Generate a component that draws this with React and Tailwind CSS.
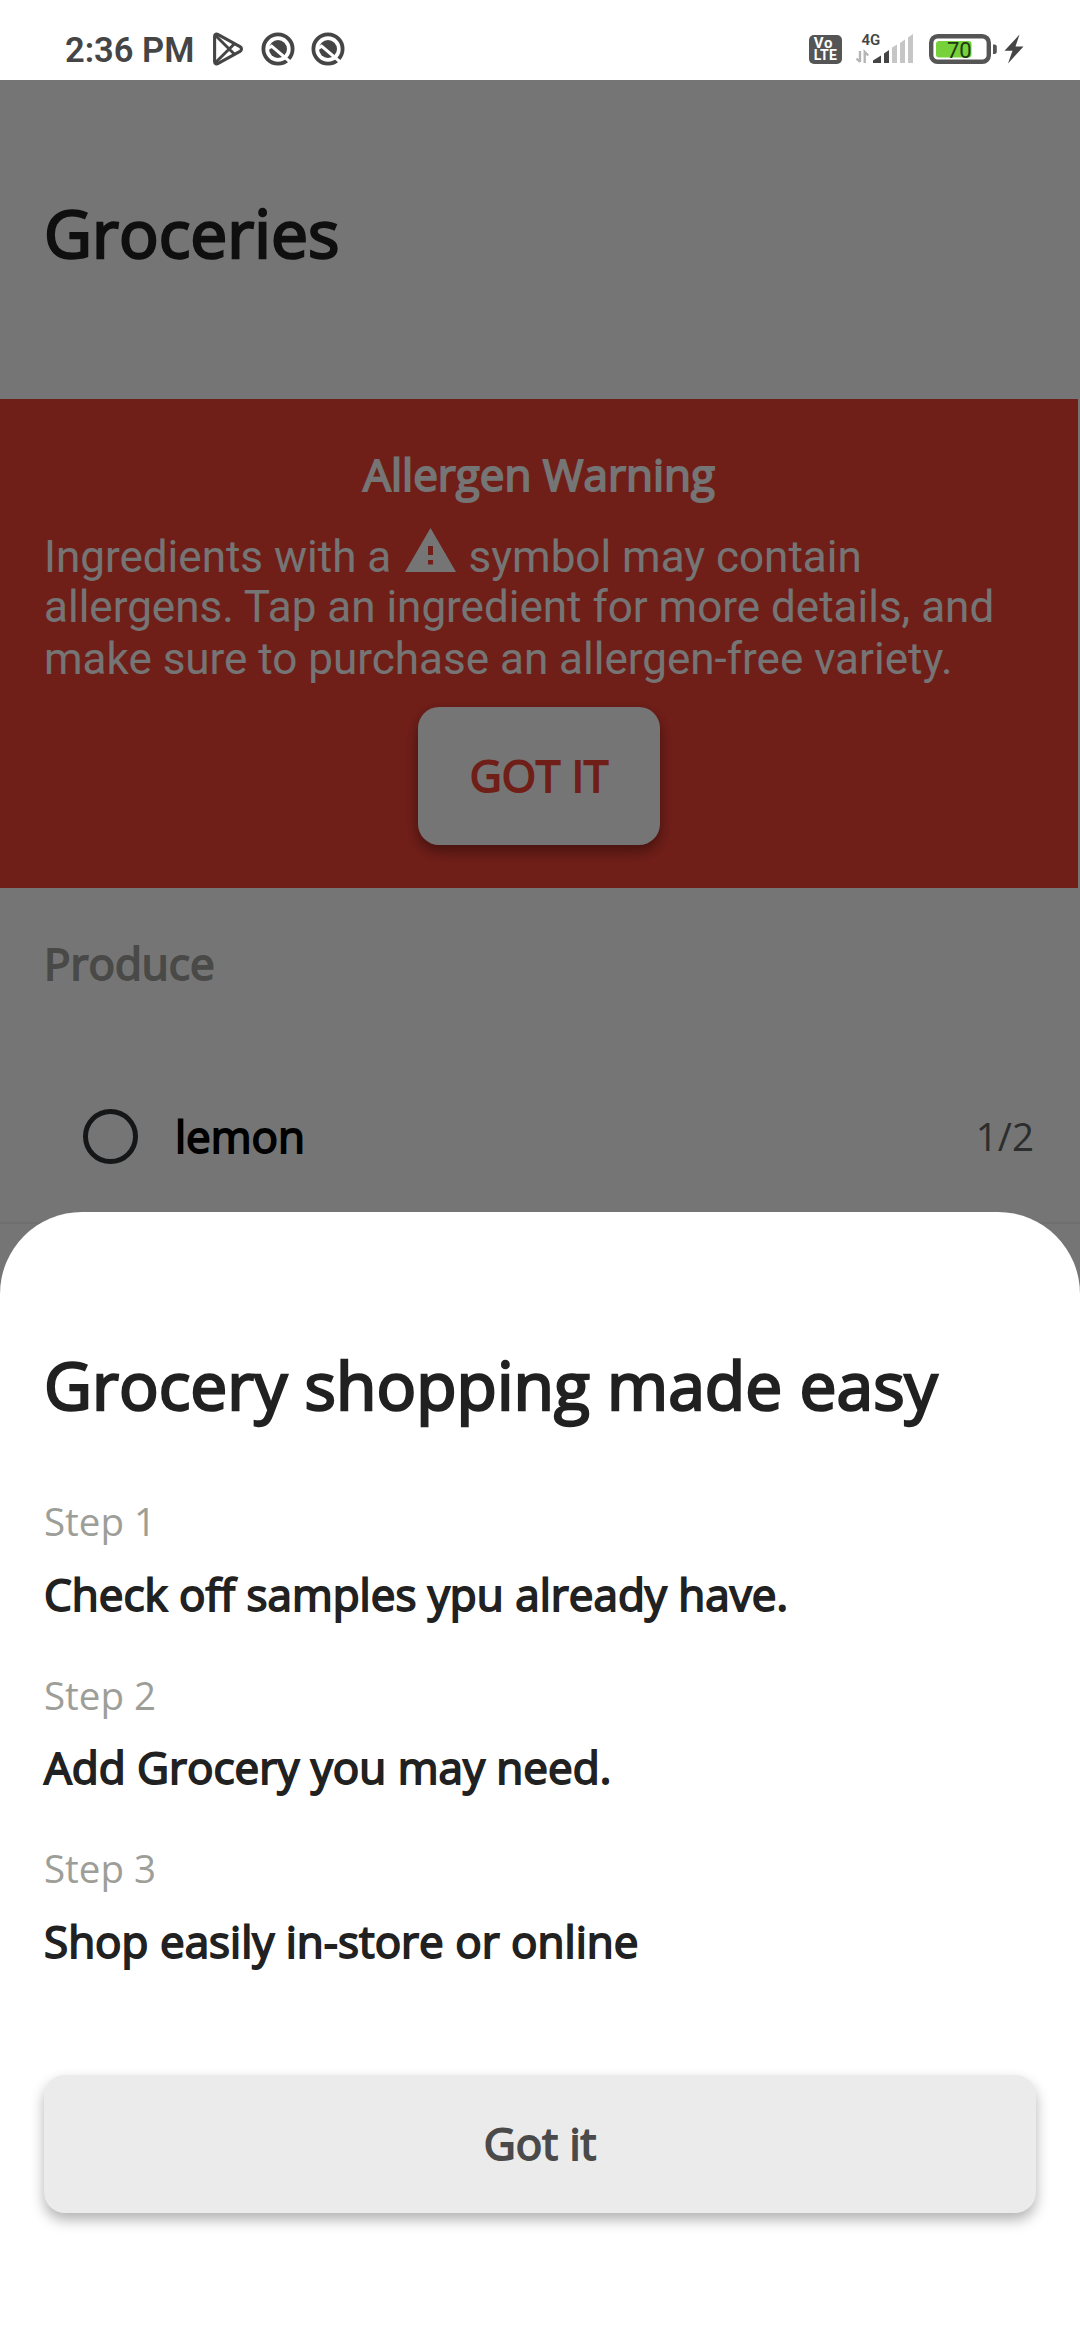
const steps = [
  { label: "Step 1", text: "Check off samples ypu already have." },
  { label: "Step 2", text: "Add Grocery you may need." },
  { label: "Step 3", text: "Shop easily in-store or online" },
];

function PlayIcon() {
  return (
    <svg className="w-[32px] h-[34px]" viewBox="0 0 32 34" fill="none" stroke="#454545" strokeWidth="3.1" strokeLinejoin="round">
      <path d="M2.6 4.2C2.6 2.2 4.6 1.6 6.2 2.6L28 14.6C30 15.8 30 18.2 28 19.4L6.2 31.4C4.6 32.4 2.6 31.8 2.6 29.8Z" />
      <path d="M3.5 3.5L22.5 22.2M3.5 30.5L22.5 11.8" strokeWidth="2.9" />
    </svg>
  );
}

function QIcon() {
  return (
    <svg className="w-[34px] h-[34px]" viewBox="0 0 34 34" fill="none">
      <circle cx="17" cy="17" r="14.6" stroke="#454545" strokeWidth="3.8" />
      <circle cx="17" cy="17" r="9" fill="#454545" />
      <path d="M6 17.3L10.6 14.2L31 31.5" stroke="#fff" strokeWidth="3" />
    </svg>
  );
}

function VolteIcon() {
  return (
    <div className="mt-px flex h-[29px] w-[33px] flex-col items-center justify-center rounded-[5px] bg-[#555] font-['Roboto',sans-serif] font-bold text-white">
      <span className="-ml-1 text-[15px] leading-[12px] tracking-[0.8px]">Vo</span>
      <span className="text-[14px] leading-[13px] tracking-[0.3px]">LTE</span>
    </div>
  );
}

function SignalIcon() {
  return (
    <svg className="-mt-px h-[34px] w-[60px]" viewBox="0 0 60 34">
      <text x="6.5" y="14" fontFamily="Roboto, sans-serif" fontWeight="600" fontSize="15" fill="#454545">4G</text>
      <path d="M5 20V31M1.5 27.5L5 31" stroke="#b5b5b5" strokeWidth="2.4" fill="none" />
      <path d="M9.7 32V21L13.2 24.5" stroke="#b5b5b5" strokeWidth="2.4" fill="none" />
      <path d="M18 32V29.5L26 24.5V32Z" fill="#454545" />
      <path d="M29 32V22.5L34 19V32Z" fill="#454545" />
      <path d="M37 32V16.5L42 13.5V32ZM45 32V12L50 8.5V32ZM53 32V6.5L58 3V32Z" fill="#c6c6c6" />
    </svg>
  );
}

function BatteryIcon() {
  return (
    <svg className="h-[34px] w-[70px]" viewBox="0 0 70 34">
      <rect x="2.2" y="4.2" width="57.6" height="25.6" rx="6.5" fill="#fff" stroke="#555" strokeWidth="4.4" />
      <rect x="7" y="9" width="35.5" height="16.5" rx="3" fill="#76d13b" />
      <path d="M64 12.5h1.5q2.3 0 2.3 2.3v5q0 2.3-2.3 2.3H64Z" fill="#555" />
      <text x="18" y="25.6" fontFamily="Roboto, sans-serif" fontWeight="400" fontSize="22" fill="#1d3a10">70</text>
    </svg>
  );
}

function StatusBar() {
  return (
    <header className="flex h-20 items-center bg-white pl-[65px] pr-[56px] pt-[17px]">
      <span className="mt-1 w-[129px] whitespace-nowrap font-['Roboto',sans-serif] text-[34.5px] font-semibold leading-none text-[#454545]">2:36 PM</span>
      <div className="ml-[18px] flex items-center gap-4">
        <PlayIcon />
        <div className="ml-px flex items-center gap-4">
          <QIcon />
          <QIcon />
        </div>
      </div>
      <div className="ml-auto flex items-center">
        <VolteIcon />
        <div className="ml-[13px]"><SignalIcon /></div>
        <div className="ml-[14px]"><BatteryIcon /></div>
        <svg className="ml-[5px] h-[30px] w-[20px]" viewBox="0 0 20 30">
          <path d="M15.5 0.5L0.5 16.8H8.5L4 29.5L19.5 12.6H11.5Z" fill="#454545" />
        </svg>
      </div>
    </header>
  );
}

function AllergenBanner() {
  return (
    <section className="flex h-[489px] w-[1078px] flex-col items-center bg-[#f44336] pt-[45px] text-white">
      <h2 className="text-[44px] leading-[60px] [-webkit-text-stroke:1.8px_currentColor]">Allergen Warning</h2>
      <div className="mt-[24px] w-full pl-[44px] font-['Roboto',sans-serif] text-[44px] leading-[52px]">
        <p className="flex h-[53px] items-baseline whitespace-pre">
          <span>{"Ingredients with a "}</span>
          <svg className="ml-[2.5px] mr-[2px] h-[44px] w-[51px]" viewBox="0 0 51 44">
            <path fillRule="evenodd" d="M25.5 0L51 44H0ZM23 18V27H28V18ZM23 32V36.5H28V32Z" fill="currentColor" />
          </svg>
          <span>{" symbol may contain"}</span>
        </p>
        <p className="whitespace-nowrap">allergens. Tap an ingredient for more details, and</p>
        <p className="whitespace-nowrap">make sure to purchase an allergen-free variety.</p>
      </div>
      <button className="mt-[22px] h-[138px] w-[242px] rounded-[21px] bg-white pb-[2px] text-[44px] leading-[60px] text-[#f44336] shadow-[0_6px_14px_rgba(0,0,0,0.4)] [-webkit-text-stroke:1.8px_currentColor]">
        GOT IT
      </button>
    </section>
  );
}

function GroceryList() {
  return (
    <section className="pt-[45px]">
      <h3 className="pl-[44px] text-[44px] leading-[60px] text-[#a0a09c] [-webkit-text-stroke:1.8px_currentColor]">Produce</h3>
      <div className="mt-[57px] flex h-[174px] items-center border-b-2 border-[#f2f2f2] pl-[82.5px] pr-[46px]">
        <span className="size-[55px] rounded-full border-[5.5px] border-[#2c3136]" />
        <span className="ml-[37.5px] text-[44px] leading-[60px] text-black [-webkit-text-stroke:1.8px_currentColor]">lemon</span>
        <span className="ml-auto text-[38.5px] leading-[52px] text-[#606464]">1/2</span>
      </div>
    </section>
  );
}

function OnboardingSheet() {
  return (
    <section className="absolute inset-x-0 bottom-0 top-[1212px] flex flex-col rounded-t-[82px] bg-white px-[44px] pt-[127px] text-[#212121]">
      <h2 className="text-[66px] leading-[90px] [-webkit-text-stroke:2.4px_currentColor]">Grocery shopping made easy</h2>
      <ol className="mt-[66px] flex flex-col gap-[45px]">
        {steps.map((step) => (
          <li key={step.label} className="flex flex-col gap-4">
            <span className="text-[38.5px] leading-[52.5px] text-[#9e9e98]">{step.label}</span>
            <span className="text-[44px] leading-[60px] [-webkit-text-stroke:1.8px_currentColor]">{step.text}</span>
          </li>
        ))}
      </ol>
      <button className="mt-[104px] h-[138px] rounded-[21px] bg-[#ebebeb] pb-[2px] text-[44px] leading-[60px] text-[#4a4a4a] shadow-[0_7px_14px_rgba(0,0,0,0.3)] [-webkit-text-stroke:1.8px_currentColor]">
        Got it
      </button>
    </section>
  );
}

export default function App() {
  return (
    <div className="relative h-[2340px] w-[1080px] overflow-hidden bg-white font-['Open_Sans',sans-serif]">
      <StatusBar />
      <main>
        <h1 className="h-[319px] pl-[44px] pt-[107px] text-[66px] leading-[90px] text-[#212121] [-webkit-text-stroke:2.4px_currentColor]">Groceries</h1>
        <AllergenBanner />
        <GroceryList />
      </main>
      <div className="absolute inset-x-0 bottom-0 top-20 bg-black/54" />
      <OnboardingSheet />
    </div>
  );
}
